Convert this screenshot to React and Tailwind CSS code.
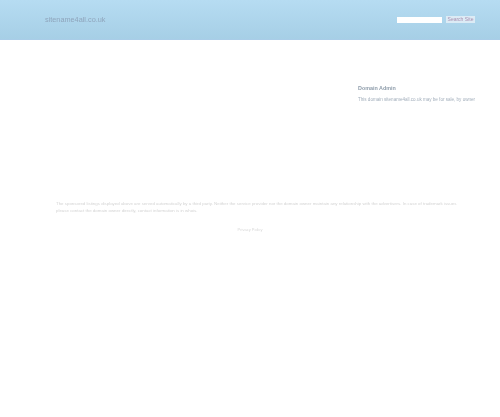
export default function App() {
  return (
    <div className="min-h-[417px] bg-white font-['Liberation_Sans',sans-serif] overflow-hidden">
      {/* Header */}
      <header className="h-[40px] flex items-center justify-between pl-[45px] pr-[25px] bg-gradient-to-b from-[#b6dcf2] to-[#a6cfe6] border-b border-[#a9cde8]">
        <div className="text-[7.3px] leading-none text-[#8fa5bc] blur-[0.7px]">
          sitename4all.co.uk
        </div>
        <div className="flex items-center gap-[4px] blur-[0.4px]">
          <div className="w-[45px] h-[6px] bg-white" />
          <button className="w-[29px] h-[7px] flex items-center justify-center bg-[#dcebf5] text-[5px] leading-none text-[#a88fb0]">
            Search Site
          </button>
        </div>
      </header>

      {/* Sidebar */}
      <div className="flex justify-end pt-[44px] pr-[25px]">
        <div className="w-[117px] blur-[0.5px]">
          <h3 className="text-[5.4px] leading-[8px] font-bold text-[#8f9dab]">Domain Admin</h3>
          <p className="mt-[4px] text-[4.55px] leading-[7px] whitespace-nowrap text-[#a3afbc]">
            This domain sitename4all.co.uk may be for sale, by owner
          </p>
        </div>
      </div>

      {/* Legal text */}
      <div className="mt-[97px] ml-[56px] w-[405px] blur-[0.5px]">
        <p className="text-[4.4px] leading-[7px] text-[#d4d4d4]">
          The sponsored listings displayed above are served automatically by a third party. Neither the service provider nor the domain owner maintain any relationship with the advertisers. In case of trademark issues please contact the domain owner directly, contact information is in whois.
        </p>
      </div>

      {/* Footer link */}
      <div className="mt-[13px] text-center text-[4px] leading-[6px] text-[#d8d8d8] blur-[0.5px]">
        Privacy Policy
      </div>
    </div>
  )
}
